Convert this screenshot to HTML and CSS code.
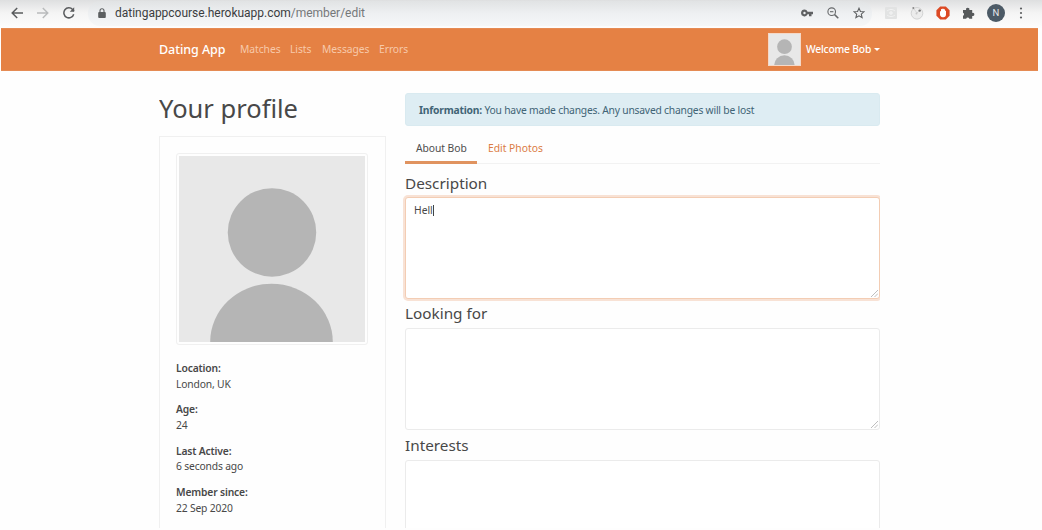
FILE: index.html
```html
<!DOCTYPE html>
<html lang="en">
<head>
<meta charset="utf-8">
<title>Dating App</title>
<link rel="stylesheet" href="styles.css">
</head>
<body>
<svg class="defs" aria-hidden="true">
  <symbol id="avatar" viewBox="0 0 185 185">
    <rect width="185" height="185" fill="#e8e8e8"/>
    <circle cx="92.5" cy="76" r="44" fill="#b5b5b5"/>
    <path d="M31 185a61 58 0 0 1 122 0z" fill="#b5b5b5"/>
  </symbol>
</svg>
<div class="browser">
  <div class="controls">
    <svg width="12" height="12" viewBox="0 0 12 12" fill="none" stroke="#5a5c5e" stroke-width="1.5"><path d="M12 6H1.2M6.2 1L1.2 6l5 5"/></svg>
    <svg width="12" height="12" viewBox="0 0 12 12" fill="none" stroke="#b9bbbc" stroke-width="1.4"><path d="M0 6h10.8M5.8 1l5 5-5 5"/></svg>
    <svg width="12" height="12" viewBox="0 0 12 12" fill="none" stroke="#5a5c5e" stroke-width="1.5"><path d="M10.7 7.2A5 5 0 1 1 9.6 2.5L11 4"/><path d="M11.2.3v4.5H6.8z" fill="#5a5c5e" stroke="none"/></svg>
  </div>
  <div class="address">
    <svg width="8" height="11" viewBox="0 0 8 11"><rect x=".2" y="4" width="7.6" height="6" rx="1" fill="#5c5f61"/><path d="M2 4.5V2.7a2 2 0 0 1 4 0v1.8" fill="none" stroke="#5c5f61" stroke-width="1.1"/></svg>
    <span class="url">datingappcourse.herokuapp.com<span class="path">/member/edit</span></span>
    <div class="address-icons">
      <svg width="12" height="8" viewBox="0 0 12 8"><path fill-rule="evenodd" fill="#5f6163" d="M3.5.6a3.4 3.4 0 1 0 3.1 4.7H8v2h2.500v-2H12V2.700H6.600A3.400 3.400 0 0 0 3.500.600zM3.500 2.800a1.200 1.200 0 1 1 0 2.400 1.200 1.200 0 0 1 0-2.400z"/></svg>
      <svg width="12" height="12" viewBox="0 0 12 12" fill="none" stroke="#66686a" stroke-width="1.1"><circle cx="4.7" cy="4.7" r="3.8"/><path d="M3 4.7h3.4"/><path d="M7.6 7.6l3.7 3.7" stroke-width="1.5"/></svg>
      <svg width="12" height="12" viewBox="0 0 12 12" fill="none" stroke="#5f6163" stroke-width="1.1"><path d="M6 1.200l1.450 3.250 3.500.35-2.650 2.350.8 3.450L6 8.800l-3.100 1.800.8-3.450L1.050 4.800l3.500-.35z"/></svg>
    </div>
  </div>
  <div class="extensions">
    <svg width="14" height="14" viewBox="0 0 14 14"><rect x="1" y="1" width="12" height="12" rx="1" fill="#e2e3e3"/><circle cx="7" cy="7" r="1.2" fill="none" stroke="#f7f7f7"/><path d="M3 5c2-2 6-2 8 0M3 9c2 2 6 2 8 0" stroke="#f2f2f2" fill="none"/></svg>
    <svg width="14" height="14" viewBox="0 0 14 14"><circle cx="7" cy="7.3" r="5.8" fill="#ececec" stroke="#d2d3d3"/><path d="M4 3l3 4 3-3" fill="none" stroke="#ccc" stroke-width=".7"/><circle cx="3.3" cy="2" r="1" fill="#888"/><circle cx="9.7" cy="4.600" r="1.200" fill="#777"/><circle cx="6.500" cy="7.500" r="1" fill="#c8c8c8"/></svg>
    <svg width="14" height="14" viewBox="0 0 14 14"><path d="M4.200.4h5.600l3.800 3.800v5.600l-3.800 3.800H4.200L.4 9.800V4.200z" fill="#dc4a25"/><path d="M4 5.500l1-.4V3.400c.5-.7 1-.6 1.200-.2.300-.8 1.200-.8 1.500 0 .4-.4 1.100-.2 1.200.5l.4 1 .7.200v3.600c0 1.600-1 2.700-2.600 2.700H6.600C5 11.200 4 9.800 4 8.500z" fill="#fff"/></svg>
    <svg width="13" height="12" viewBox="0 0 13 12"><path d="M1 2.900h3.100a1.700 1.700 0 1 1 3.300 0h2.800v3a1.600 1.600 0 1 1 0 3v2.900H7.300a1.600 1.600 0 0 0-3.100 0H1V8.700a1.600 1.600 0 0 0 0-3z" fill="#56595b"/></svg>
    <span class="account">N</span>
    <svg class="more" width="4" height="12" viewBox="0 0 4 12" fill="#5c5e60"><circle cx="2" cy="1.5" r="1.100"/><circle cx="2" cy="6" r="1.100"/><circle cx="2" cy="10.500" r="1.100"/></svg>
  </div>
</div>
<nav class="navbar">
  <a class="brand">Dating App</a>
  <a class="link matches">Matches</a>
  <a class="link lists">Lists</a>
  <a class="link messages">Messages</a>
  <a class="link errors">Errors</a>
  <div class="user"><svg class="thumb"><use href="#avatar"/></svg><span class="welcome">Welcome Bob</span><i class="caret"></i></div>
</nav>
<main class="page">
  <aside class="sidebar">
    <h1>Your profile</h1>
    <section class="card">
      <div class="photo"><svg><use href="#avatar"/></svg></div>
      <dl>
        <dt>Location:</dt><dd>London, UK</dd>
        <dt>Age:</dt><dd>24</dd>
        <dt>Last Active:</dt><dd>6 seconds ago</dd>
        <dt>Member since:</dt><dd>22 Sep 2020</dd>
      </dl>
    </section>
  </aside>
  <section class="content">
    <div class="alert"><strong>Information:</strong> <span>You have made changes. Any unsaved changes will be lost</span></div>
    <div class="tabs"><a class="tab active">About Bob</a><a class="tab">Edit Photos</a></div>
    <h4 class="description">Description</h4>
    <div class="field focused"><span>Hell</span><i class="cursor"></i><svg class="grip" viewBox="0 0 8 8"><path d="M0 8L8 0M4 8l4-4"/></svg></div>
    <h4 class="looking">Looking for</h4>
    <div class="field"><svg class="grip" viewBox="0 0 8 8"><path d="M0 8L8 0M4 8l4-4"/></svg></div>
    <h4 class="interests">Interests</h4>
    <div class="field"></div>
  </section>
</main>
</body>
</html>
```
FILE: styles.css
```css
* { box-sizing: border-box; }
body { margin: 0; height: 530px; overflow: hidden; background: #fefefe; color: #484848; font: 10.3px/15.5px "Noto Sans", sans-serif; }
svg { display: block; flex: none; }
.defs { position: absolute; width: 0; height: 0; }
.browser { height: 28px; display: flex; align-items: center; padding: 0 18px 2px 11px; background: linear-gradient(#dedfe0, #f4f4f4 45%, #fdfdfd); }
.controls { display: flex; gap: 14px; width: 77px; }
.address { width: 784px; height: 25px; padding: 0 7px 0 10px; display: flex; align-items: center; border-radius: 12px; background: linear-gradient(#e1e3e4, #eef0f2 50%, #f5f7f8); }
.url { margin-left: 9px; font: 12px/16px Roboto, sans-serif; color: #3b3d3f; letter-spacing: -.02px; white-space: nowrap; }
.path { color: #75787a; }
.address-icons { display: flex; align-items: center; gap: 14px; margin-left: auto; }
.extensions { display: flex; align-items: center; gap: 12px; margin-left: 12px; }
.account { width: 18px; height: 18px; border-radius: 50%; background: #4c5a66; color: #e5e8eb; font: 9.5px/18px Roboto, sans-serif; text-align: center; }
.more { margin-left: 2px; }
.navbar { height: 43px; margin: 0 4px 0 1px; padding: 0 158px; background: #e58144; border-top: 1px solid #e58b54; border-bottom: 1px solid #e58b54; display: flex; align-items: center; color: #fff; white-space: nowrap; }
.brand { width: 81px; font-size: 12.5px; font-weight: 500; letter-spacing: -.05px; padding-top: 1px; }
.link { color: #f7c9aa; padding-top: 1px; letter-spacing: -.05px; }
.matches { width: 50px; }
.lists { width: 32px; }
.messages { width: 57px; }
.user { display: flex; align-items: center; margin-left: auto; }
.thumb { width: 33px; height: 33px; border: 1px solid #f5d9c8; background: #e8e8e8; }
.welcome { margin-left: 5px; width: 65px; font-weight: 500; letter-spacing: -.2px; }
.caret { margin-left: 3px; border: 3px solid transparent; border-top-color: #fff; border-bottom: 0; }
.page { height: 457px; overflow: hidden; margin: 0 162px 0 159px; padding-top: 22px; display: grid; grid-template-columns: 227px 475px; gap: 19px; }
h1 { margin: 0; height: 43px; font-size: 25.5px; line-height: 31px; font-weight: 400; }
.card { height: 420px; border: 1px solid #f0f0f0; padding: 16px; }
.photo { width: 192px; height: 192px; border: 1px solid #f0f0f0; border-radius: 3px; padding: 2px; }
.photo svg { width: 186px; height: 186px; }
dl { margin: 16px 0 0; letter-spacing: -.16px; }
dt { font-weight: 600; }
dd { margin: 0 0 10.4px; }
.alert { height: 33px; padding: 9px 13px; border: 1px solid #d9eaf0; border-radius: 3px; background: #deedf3; color: #416476; white-space: nowrap; letter-spacing: -.21px; }
.tabs { height: 38px; display: flex; align-items: flex-end; border-bottom: 1px solid #f2f2f2; white-space: nowrap; }
.tab { height: 28px; padding: 6px 11px; color: #db7c43; }
.tab.active { width: 72px; padding-top: 6px; color: #4d4d4d; border-bottom: 3px solid #e0935f; margin-bottom: -1px; height: 29px; letter-spacing: -.05px; }
h4 { margin: 0; font-size: 15.3px; line-height: 19px; font-weight: 400; }
.description { padding-top: 10px; height: 33px; }
.looking { padding-top: 5px; height: 29px; }
.interests { padding-top: 6px; height: 30px; }
.field { position: relative; height: 102px; border: 1px solid #ebebeb; border-radius: 3px; padding: 5px 8px; display: flex; background: #fff; }
.focused { height: 102px; border-color: #f3cdb4; box-shadow: 0 0 0 2px #f8e2d5; }
.cursor { width: 1px; height: 11px; margin-top: 2px; background: #444; }
.grip { position: absolute; right: 1px; bottom: 1px; width: 7px; height: 7px; fill: none; stroke: #b5b5b5; }
```
